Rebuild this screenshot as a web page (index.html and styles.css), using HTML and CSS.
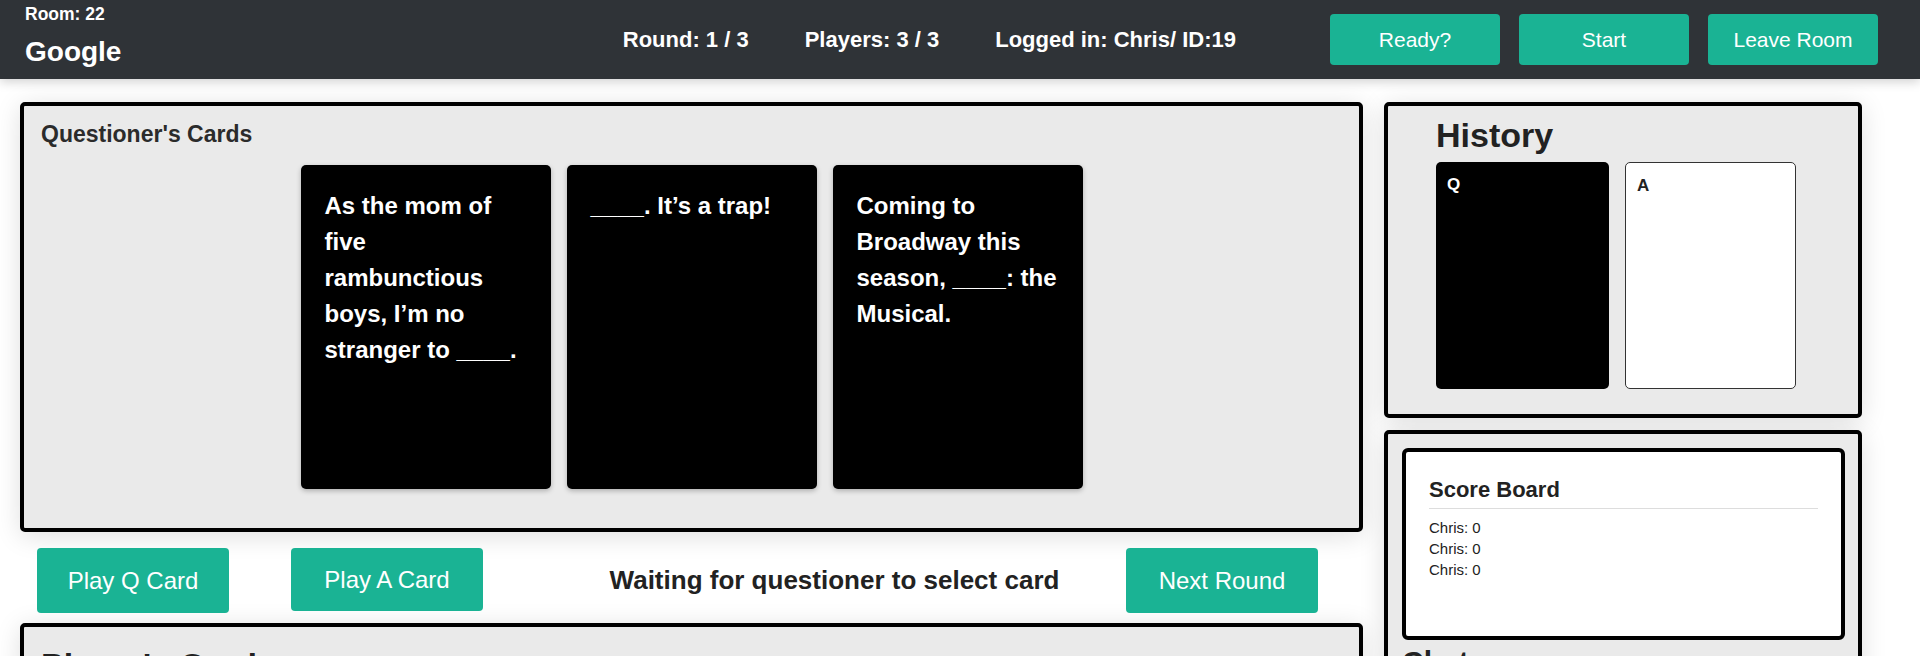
FILE: index.html
```html
<!DOCTYPE html>
<html lang="en">
<head>
<meta charset="utf-8">
<title>Room 22 - Google</title>
<link rel="stylesheet" href="styles.css">
</head>
<body>
<header class="navbar">
  <div class="brand">
    <div class="room-id">Room: 22</div>
    <div class="room-name">Google</div>
  </div>
  <div class="nav-info">
    <span>Round: 1 / 3</span>
    <span>Players: 3 / 3</span>
    <span>Logged in: Chris/ ID:19</span>
  </div>
  <div class="nav-actions">
    <button class="btn btn-nav">Ready?</button>
    <button class="btn btn-nav">Start</button>
    <button class="btn btn-nav">Leave Room</button>
  </div>
</header>

<main class="layout">
  <section class="left-col">
    <div class="panel questioner">
      <h4 class="panel-title">Questioner's Cards</h4>
      <div class="card-row">
        <div class="qcard">As the mom of five rambunctious boys, I’m no stranger to ____.</div>
        <div class="qcard">____. It’s a trap!</div>
        <div class="qcard">Coming to Broadway this season, ____: the Musical.</div>
      </div>
    </div>

    <div class="actions">
      <button class="btn btn-play">Play Q Card</button>
      <button class="btn btn-play btn-play-a">Play A Card</button>
      <div class="status"><span>Waiting for questioner to select card</span></div>
      <button class="btn btn-play">Next Round</button>
    </div>

    <div class="panel players">
      <h2 class="big-title">Player's Cards</h2>
    </div>
  </section>

  <aside class="right-col">
    <div class="panel history">
      <h2 class="history-title">History</h2>
      <div class="history-cards">
        <div class="hcard hcard-q">Q</div>
        <div class="hcard hcard-a">A</div>
      </div>
    </div>

    <div class="panel scores">
      <div class="score-box">
        <h5 class="score-title">Score Board</h5>
        <ul class="score-list">
          <li>Chris: 0</li>
          <li>Chris: 0</li>
          <li>Chris: 0</li>
        </ul>
      </div>
      <h3 class="chat-title">Chat</h3>
    </div>
  </aside>
</main>
</body>
</html>
```

FILE: styles.css
```css
* { box-sizing: border-box; }

html, body {
  margin: 0;
  padding: 0;
  background: #ffffff;
  overflow: hidden;
}

body {
  font-family: "Liberation Sans", Arial, sans-serif;
  color: #212529;
  width: 1920px;
  height: 656px;
}

h2, h3, h4, h5 { margin: 0; }

/* ---------- navbar ---------- */
.navbar {
  height: 79px;
  background: #2f3337;
  display: flex;
  align-items: center;
  padding: 0 42px 0 25px;
  color: #ffffff;
  box-shadow: 0 3px 10px rgba(0, 0, 0, 0.18);
  position: relative;
  z-index: 2;
}

.brand {
  align-self: flex-start;
  padding-top: 4px;
}

.room-id {
  font-size: 17.5px;
  font-weight: 700;
  line-height: 20px;
}

.room-name {
  font-size: 28px;
  font-weight: 700;
  line-height: 34px;
  margin-top: 11px;
}

.nav-info {
  margin-left: auto;
  margin-right: 94px;
  display: flex;
  gap: 56px;
  font-size: 22px;
  font-weight: 700;
  white-space: nowrap;
}

.nav-actions {
  display: flex;
  gap: 19px;
}

.btn {
  font-family: inherit;
  background: #1ab394;
  color: #ffffff;
  border: none;
  border-radius: 4px;
  cursor: pointer;
  padding: 0;
}

.btn-nav {
  width: 170px;
  height: 51px;
  font-size: 21px;
}

/* ---------- layout ---------- */
.layout {
  display: grid;
  grid-template-columns: 1343px 478px;
  column-gap: 21px;
  padding: 23px 0 0 20px;
}

.panel {
  background: #eaeaea;
  border: 4px solid #000000;
  border-radius: 5px;
  box-shadow: 0 4px 26px rgba(0, 0, 0, 0.13);
}

/* ---------- questioner ---------- */
.questioner {
  height: 430px;
  padding: 14px 17px 0;
}

.panel-title {
  font-size: 23px;
  font-weight: 700;
  line-height: 28px;
  color: #2b2b2b;
}

.card-row {
  display: flex;
  justify-content: center;
  gap: 16px;
  margin-top: 17px;
}

.qcard {
  width: 250px;
  height: 324px;
  background: #000000;
  color: #ffffff;
  border-radius: 5px;
  padding: 23px 23px 20px 24px;
  font-size: 24px;
  font-weight: 700;
  line-height: 36px;
  box-shadow: 0 2px 5px rgba(0, 0, 0, 0.25);
}

/* ---------- actions ---------- */
.actions {
  display: flex;
  align-items: center;
  margin-top: 16px;
  padding: 0 45px 0 17px;
  height: 65px;
}

.btn-play {
  width: 192px;
  height: 65px;
  font-size: 24px;
  flex: none;
}

.btn-play-a {
  margin-left: 62px;
  height: 63px;
  align-self: flex-start;
}

.status {
  flex: 1;
  text-align: center;
  padding-left: 60px;
  font-size: 26px;
  font-weight: 700;
  color: #222222;
  white-space: nowrap;
}

/* ---------- players ---------- */
.players {
  margin-top: 10px;
  height: 200px;
  padding: 18px 17px;
}

.big-title {
  font-size: 34px;
  font-weight: 700;
  line-height: 40px;
  color: #222222;
}

/* ---------- history ---------- */
.history {
  height: 316px;
  padding: 9px 20px 0 48px;
}

.history-title {
  font-size: 34px;
  font-weight: 700;
  line-height: 40px;
  color: #222222;
}

.history-cards {
  display: flex;
  gap: 16px;
  margin-top: 7px;
}

.hcard {
  height: 227px;
  border-radius: 5px;
  padding: 12px 11px;
  font-size: 17px;
  font-weight: 700;
  line-height: 22px;
}

.hcard-q {
  width: 173px;
  background: #000000;
  color: #ffffff;
}

.hcard-a {
  width: 171px;
  background: #ffffff;
  color: #222222;
  border: 1px solid #333333;
}

/* ---------- score ---------- */
.scores {
  margin-top: 12px;
  height: 300px;
  padding: 14px 13px 14px 14px;
}

.score-box {
  height: 192px;
  background: #ffffff;
  border: 4px solid #000000;
  border-radius: 6px;
  padding: 25px 23px 22px;
}

.score-title {
  font-size: 22px;
  font-weight: 700;
  line-height: 26px;
  color: #222222;
  padding-bottom: 5px;
  border-bottom: 1px solid #dddddd;
}

.score-list {
  list-style: none;
  margin: 8px 0 0;
  padding: 0;
  font-size: 15px;
  line-height: 21px;
  color: #222222;
}

.chat-title {
  font-size: 30px;
  font-weight: 700;
  line-height: 36px;
  margin-top: 4px;
  color: #222222;
}
```
